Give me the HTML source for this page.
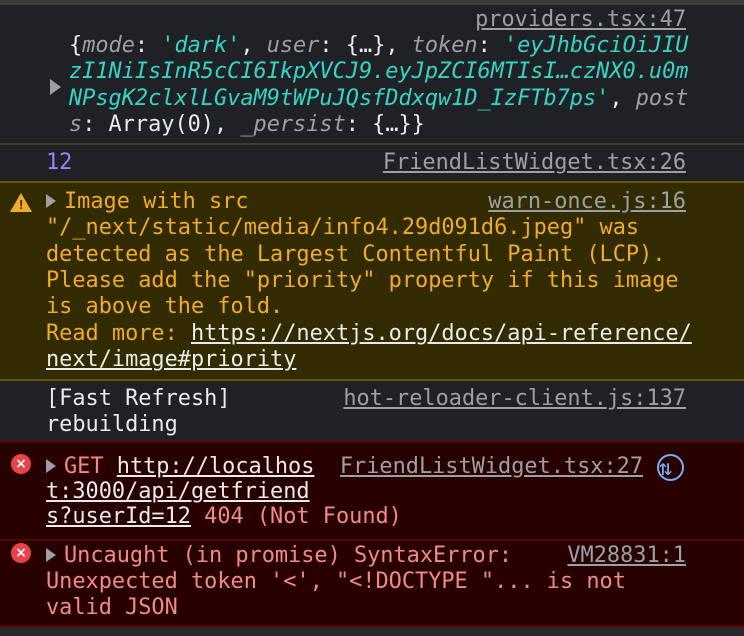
<!DOCTYPE html>
<html><head><meta charset="utf-8"><style>
body{margin:0;width:744px;height:636px;background:#202124;position:relative;overflow:hidden;font-family:"DejaVu Sans Mono","Liberation Mono",monospace;font-size:21.9px;}
.l{position:absolute;left:46px;height:26px;line-height:26px;white-space:pre;color:#e8eaed;}
.r{position:absolute;right:58px;height:26px;line-height:26px;white-space:pre;color:#9aa0a6;text-decoration:underline;}
.sec{position:absolute;left:0;width:744px;}
.k{color:#9aa0a6;font-style:italic}
.s{color:#35d4c7;font-style:italic}
.w{color:#f2ab26}
.e{color:#f28b82}
.u{text-decoration:underline;color:#e8eaed}
.tri{display:inline-block;width:0;height:0;border-left:10px solid #9aa0a6;border-top:7px solid transparent;border-bottom:7px solid transparent;margin-right:8px;vertical-align:0px}
.ic{position:absolute;left:11px;width:20px;height:20px;border-radius:50%;background:#e8424b;color:#fff;font:bold 14px/20px "DejaVu Sans",sans-serif;text-align:center}
</style></head><body>
<div class="sec" style="top:0;height:5px;background:#3c3c3c"></div>
<div class="sec" style="top:143px;height:2px;background:#3c3c3c"></div>
<div class="sec" style="top:181px;height:200px;background:#332b00;border-top:2px solid #665500;border-bottom:2px solid #665500;box-sizing:border-box"></div>
<div class="sec" style="top:441px;height:186px;background:#290000;border-top:2px solid #5c0000;box-sizing:border-box"></div>
<div class="sec" style="top:539px;height:2px;background:#5c0000"></div>
<div class="sec" style="top:625px;height:11px;background:#282828;border-top:2px solid #5c0000;box-sizing:border-box"></div>

<div class="r" style="top:7px">providers.tsx:47</div>
<div class="l" style="top:33px;left:69px">{<span class="k">mode</span>: <span class="s">'dark'</span>, <span class="k">user</span>: {…}, <span class="k">token</span>: <span class="s">'eyJhbGciOiJIU</span></div>
<div class="l" style="top:59px;left:69px"><span class="s">zI1NiIsInR5cCI6IkpXVCJ9.eyJpZCI6MTIsI…czNX0.u0m</span></div>
<div class="l" style="top:86px;left:69px"><span class="s">NPsgK2clxlLGvaM9tWPuJQsfDdxqw1D_IzFTb7ps'</span>, <span class="k">post</span></div>
<div class="l" style="top:112px;left:69px"><span class="k">s</span>: Array(0), <span class="k">_persist</span>: {…}}</div>
<div style="position:absolute;left:50px;top:79px;border-left:11px solid #9aa0a6;border-top:8px solid transparent;border-bottom:8px solid transparent"></div>

<div class="l" style="top:150px;color:#9980ff">12</div>
<div class="r" style="top:150px">FriendListWidget.tsx:26</div>

<div style="position:absolute;left:10px;top:193px;width:0;height:0;border-left:11px solid transparent;border-right:11px solid transparent;border-bottom:19px solid #f2ab26"></div>
<div style="position:absolute;left:19px;top:197px;color:#332b00;font:bold 13px/15px sans-serif">!</div>
<div class="l w" style="top:189px"><span class="tri"></span>Image with src</div>
<div class="r" style="top:189px">warn-once.js:16</div>
<div class="l w" style="top:215px">"/_next/static/media/info4.29d091d6.jpeg" was</div>
<div class="l w" style="top:242px">detected as the Largest Contentful Paint (LCP).</div>
<div class="l w" style="top:268px">Please add the "priority" property if this image</div>
<div class="l w" style="top:294px">is above the fold.</div>
<div class="l w" style="top:321px">Read more: <span class="u">https://nextjs.org/docs/api-reference/</span></div>
<div class="l w" style="top:347px"><span class="u">next/image#priority</span></div>

<div class="l" style="top:386px">[Fast Refresh]</div>
<div class="r" style="top:386px">hot-reloader-client.js:137</div>
<div class="l" style="top:412px">rebuilding</div>

<div class="ic" style="top:454px">×</div>
<div class="l e" style="top:454px"><span class="tri"></span>GET <span class="u">http://localhos</span></div>
<div class="r" style="top:454px;right:101px">FriendListWidget.tsx:27</div>
<div style="position:absolute;left:657px;top:454px;width:27px;height:27px;border:2px solid #7cacf8;border-radius:50%;box-sizing:border-box;color:#7cacf8;font:16px/23px "DejaVu Sans",sans-serif;text-align:center">⇅</div>
<div class="l e" style="top:479px"><span class="u">t:3000/api/getfriend</span></div>
<div class="l e" style="top:504px"><span class="u">s?userId=12</span> 404 (Not Found)</div>

<div class="ic" style="top:543px">×</div>
<div class="l e" style="top:543px"><span class="tri"></span>Uncaught (in promise) SyntaxError:</div>
<div class="r" style="top:543px">VM28831:1</div>
<div class="l e" style="top:569px">Unexpected token '&lt;', "&lt;!DOCTYPE "... is not</div>
<div class="l e" style="top:595px">valid JSON</div>
</body></html>
